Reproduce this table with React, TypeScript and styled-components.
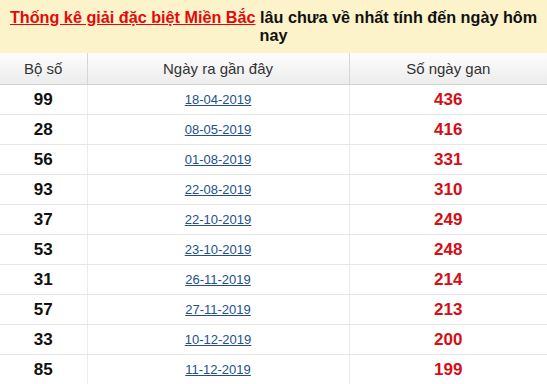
import React from "react";
import styled, { createGlobalStyle } from "styled-components";

const Global = createGlobalStyle`
  html, body { margin: 0; padding: 0; background: #fff; }
  body { font-family: "Liberation Sans", Arial, sans-serif; }
`;

const Wrap = styled.div`
  width: 547px;
`;

const Title = styled.h2`
  margin: 0;
  box-sizing: border-box;
  height: 53px;
  padding: 8px 6px 0;
  background: #fcf3cb;
  text-align: center;
  font-size: 16.2px;
  line-height: 18px;
  font-weight: bold;
  color: #111;
`;

const TitleLink = styled.a`
  color: #e20a0a;
  text-decoration: underline;
`;

const Table = styled.table`
  width: 547px;
  border-collapse: collapse;
  table-layout: fixed;
`;

const HeadCell = styled.th`
  height: 31px;
  padding: 0;
  font-size: 15px;
  font-weight: normal;
  color: #333;
  background: linear-gradient(#fdfdfd, #ececec);
  border-bottom: 1px solid #d2d2d2;
  border-left: 1px solid #d6d6d6;
  &:first-child { border-left: none; }
`;

const Cell = styled.td<{ $kind: "num" | "date" | "gan" }>`
  height: 29px;
  padding: 0;
  text-align: center;
  border-bottom: 1px solid #e6e6e6;
  border-left: 1px solid #ececec;
  &:first-child { border-left: none; }
  font-size: ${(p) => (p.$kind === "date" ? "13px" : "17px")};
  font-weight: ${(p) => (p.$kind === "date" ? "normal" : "bold")};
  color: ${(p) => (p.$kind === "gan" ? "#d50d14" : "#111")};
`;

const DateLink = styled.a`
  color: #234f8c;
  text-decoration: underline;
`;

const rows: [string, string, number][] = [
  ["99", "18-04-2019", 436],
  ["28", "08-05-2019", 416],
  ["56", "01-08-2019", 331],
  ["93", "22-08-2019", 310],
  ["37", "22-10-2019", 249],
  ["53", "23-10-2019", 248],
  ["31", "26-11-2019", 214],
  ["57", "27-11-2019", 213],
  ["33", "10-12-2019", 200],
  ["85", "11-12-2019", 199],
];

export default function App() {
  return (
    <Wrap>
      <Global />
      <Title>
        <TitleLink href="#">Thống kê giải đặc biệt Miền Bắc</TitleLink> lâu chưa về nhất tính đến ngày hôm nay
      </Title>
      <Table>
        <colgroup>
          <col style={{ width: 87 }} />
          <col style={{ width: 262 }} />
          <col style={{ width: 198 }} />
        </colgroup>
        <thead>
          <tr>
            <HeadCell>Bộ số</HeadCell>
            <HeadCell>Ngày ra gần đây</HeadCell>
            <HeadCell>Số ngày gan</HeadCell>
          </tr>
        </thead>
        <tbody>
          {rows.map(([n, d, g]) => (
            <tr key={n}>
              <Cell $kind="num">{n}</Cell>
              <Cell $kind="date">
                <DateLink href="#">{d}</DateLink>
              </Cell>
              <Cell $kind="gan">{g}</Cell>
            </tr>
          ))}
        </tbody>
      </Table>
    </Wrap>
  );
}
